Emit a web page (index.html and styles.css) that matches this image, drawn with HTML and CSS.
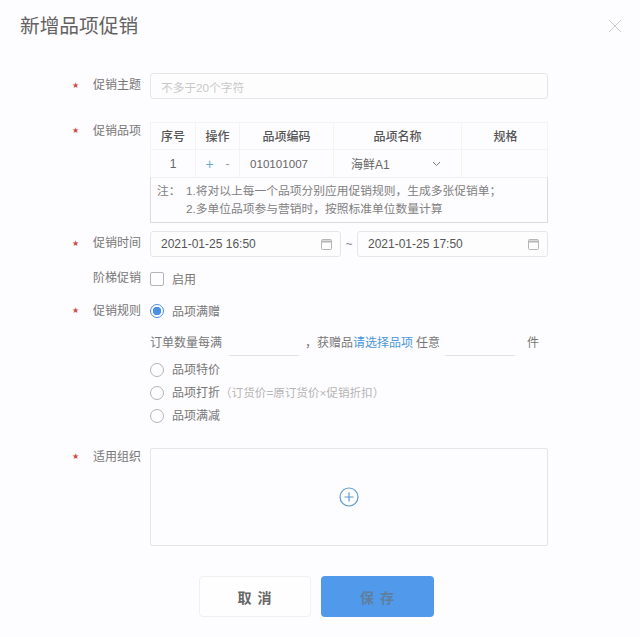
FILE: index.html
```html
<!DOCTYPE html>
<html lang="zh-CN">
<head>
    <meta charset="UTF-8">
    <meta name="viewport" content="width=device-width, initial-scale=1.0">
    <title>新增品项促销</title>
    <link rel="stylesheet" href="styles.css">
</head>
<body>
    <header class="header">
        <h1 class="title">新增品项促销</h1>
        <svg class="close" width="14" height="14" viewBox="0 0 14 14"><path d="M1 1L13 13M13 1L1 13" stroke="#c9cccf" stroke-width="1" fill="none"/></svg>
    </header>

    <form class="form">
        <div class="row row-subject">
            <span class="star">★</span>
            <label class="label">促销主题</label>
            <div class="control input placeholder">不多于20个字符</div>
        </div>

        <div class="row row-items">
            <span class="star star-top">★</span>
            <label class="label label-top">促销品项</label>
            <div class="control">
                <div class="item-table">
                    <div class="cell cell-no head">序号</div>
                    <div class="cell cell-op head">操作</div>
                    <div class="cell cell-code head">品项编码</div>
                    <div class="cell cell-name head">品项名称</div>
                    <div class="cell cell-spec head">规格</div>
                    <div class="cell cell-no">1</div>
                    <div class="cell cell-op"><span class="plus">+</span><span class="minus">-</span></div>
                    <div class="cell cell-code code-value">010101007</div>
                    <div class="cell cell-name name-select">
                        <span>海鲜A1</span>
                        <svg width="9" height="6" viewBox="0 0 9 6"><path d="M1 1L4.5 4.5L8 1" stroke="#777" fill="none"/></svg>
                    </div>
                    <div class="cell cell-spec"></div>
                </div>
                <div class="note">
                    <span class="note-tag">注：</span>
                    <div>
                        <p>1.将对以上每一个品项分别应用促销规则，生成多张促销单；</p>
                        <p>2.多单位品项参与营销时，按照标准单位数量计算</p>
                    </div>
                </div>
            </div>
        </div>

        <div class="row row-time">
            <span class="star">★</span>
            <label class="label">促销时间</label>
            <div class="control dates">
                <div class="input date">
                    <span>2021-01-25 16:50</span>
                    <svg width="11" height="11" viewBox="0 0 11 11"><rect x="0.5" y="0.5" width="10" height="10" rx="1" fill="none" stroke="#b5b5b5"/><path d="M1 2.5H10" stroke="#b5b5b5" stroke-width="2"/></svg>
                </div>
                <span class="tilde">~</span>
                <div class="input date">
                    <span>2021-01-25 17:50</span>
                    <svg width="11" height="11" viewBox="0 0 11 11"><rect x="0.5" y="0.5" width="10" height="10" rx="1" fill="none" stroke="#b5b5b5"/><path d="M1 2.5H10" stroke="#b5b5b5" stroke-width="2"/></svg>
                </div>
            </div>
        </div>

        <div class="row row-ladder">
            <span class="star"></span>
            <label class="label">阶梯促销</label>
            <div class="control option">
                <span class="checkbox"></span>
                <span class="opt-text">启用</span>
            </div>
        </div>

        <div class="row row-rule">
            <span class="star">★</span>
            <label class="label">促销规则</label>
            <div class="control">
                <div class="option"><span class="radio checked"></span><span class="opt-text">品项满赠</span></div>
                <div class="gift-line">
                    <span>订单数量每满</span>
                    <span class="blank blank-first"></span>
                    <span class="comma">，</span>
                    <span>获赠品</span>
                    <a class="link">请选择品项</a>
                    <span>任意</span>
                    <span class="blank blank-second"></span>
                    <span>件</span>
                </div>
                <div class="option option-list"><span class="radio"></span><span class="opt-text">品项特价</span></div>
                <div class="option option-list"><span class="radio"></span><span class="opt-text">品项打折</span><span class="opt-text hint">（订货价=原订货价×促销折扣）</span></div>
                <div class="option option-list"><span class="radio"></span><span class="opt-text">品项满减</span></div>
            </div>
        </div>

        <div class="row row-org">
            <span class="star star-top">★</span>
            <label class="label label-top">适用组织</label>
            <div class="control org-box">
                <svg width="20" height="20" viewBox="0 0 20 20"><circle cx="10" cy="10" r="9" fill="none" stroke="#5b9bd0" stroke-width="1.2"/><path d="M10 5.5V14.5M5.5 10H14.5" stroke="#5b9bd0" stroke-width="1.2"/></svg>
            </div>
        </div>

        <div class="actions">
            <button type="button" class="btn btn-cancel">取 消</button>
            <button type="button" class="btn btn-save">保 存</button>
        </div>
    </form>
</body>
</html>
```

FILE: styles.css
```css
* {
    box-sizing: border-box;
}
body {
    margin: 0;
    background-color: #fdfcfe;
    color: #666;
    font-family: "Liberation Sans", "Noto Sans CJK SC", sans-serif;
    font-size: 12px;
    overflow: hidden;
}
.header {
    display: flex;
    justify-content: space-between;
    align-items: center;
    padding: 12px 18px 0 20px;
    height: 40px;
}
.title {
    margin: 0;
    font-size: 19.7px;
    font-weight: 400;
    line-height: 28px;
    color: #636363;
}
.form {
    padding: 33px 92px 20px 72px;
}
.row {
    display: flex;
    align-items: flex-start;
}
.star {
    width: 21px;
    flex: none;
    color: #cf4a44;
    font-family: "DejaVu Sans", sans-serif;
    font-size: 8px;
    line-height: 26px;
}
.star-top {
    line-height: 18px;
}
.label {
    width: 57px;
    flex: none;
    line-height: 24px;
    color: #777;
}
.label-top {
    line-height: 18px;
}
.control {
    width: 398px;
    flex: none;
}
.input {
    height: 26px;
    border: 1px solid #e6e6e8;
    border-radius: 3px;
    background-color: #fdfdfe;
    display: flex;
    align-items: center;
    padding: 0 10px;
}
.placeholder {
    color: #c8c8c8;
    font-size: 11.7px;
}
.row-items {
    margin-top: 23px;
}
.item-table {
    display: grid;
    grid-template-columns: 45px 44px 94px 128px 87px;
    grid-template-rows: 27px 27px;
    border: 1px solid #f3f3f5;
    border-bottom: 0;
}
.cell {
    display: flex;
    align-items: center;
    justify-content: center;
    border-right: 1px solid #f3f3f5;
    color: #666;
}
.cell-spec {
    border-right: 0;
}
.head {
    border-bottom: 1px solid #f3f3f5;
    color: #555;
    font-weight: 500;
    padding-bottom: 1px;
}
.code-value {
    justify-content: flex-start;
    padding-left: 10px;
    font-size: 11.6px;
}
.plus {
    color: #62acc9;
    font-size: 14px;
    margin-right: 12px;
}
.minus {
    color: #999;
}
.name-select {
    justify-content: space-between;
    padding: 0 20px 0 17px;
}
.note {
    display: flex;
    height: 46px;
    border: 1px solid #dcdcde;
    border-top-color: #f0f0f2;
    padding: 4px 6px;
    color: #808080;
    font-size: 11.75px;
    line-height: 18px;
}
.note-tag {
    width: 29px;
    flex: none;
}
.note p {
    margin: 0;
}
.row-time {
    margin-top: 8px;
}
.dates {
    display: flex;
    align-items: center;
    justify-content: space-between;
}
.date {
    width: 191px;
    justify-content: space-between;
    padding-right: 8px;
    color: #555;
}
.tilde {
    color: #888;
}
.row-ladder {
    margin-top: 9px;
    height: 26px;
}
.option {
    display: flex;
    align-items: center;
    height: 26px;
    color: #777;
}
.opt-text {
    margin-bottom: 2px;
}
.checkbox {
    width: 14px;
    height: 14px;
    border: 1px solid #b5b5b5;
    border-radius: 2px;
    margin-right: 8px;
}
.radio {
    width: 14px;
    height: 14px;
    border: 1px solid #b5b5b5;
    border-radius: 50%;
    margin-right: 8px;
    flex: none;
}
.radio.checked {
    border-color: #4a90e2;
    background: radial-gradient(circle, #4a90e2 0, #4a90e2 4px, transparent 4.5px);
}
.row-rule {
    margin-top: 6px;
}
.row-rule .label {
    line-height: 27px;
}
.gift-line {
    display: flex;
    align-items: center;
    height: 29px;
    margin-top: 3px;
    color: #777;
    white-space: nowrap;
}
.blank {
    display: block;
    width: 70px;
    height: 29px;
    border-bottom: 1px solid #e2e2e4;
}
.blank-first {
    margin-left: 7px;
}
.comma {
    margin-left: 6px;
}
.link {
    color: #4a97d8;
    margin: 0 3px 0 0;
}
.blank-second {
    margin: 0 12px 0 5px;
}
.option-list {
    height: 23px;
}
.option-list:nth-child(3) {
    margin-top: 2px;
}
.hint {
    color: #b5b5b5;
    font-size: 11.6px;
}
.row-org {
    margin-top: 21px;
}
.org-box {
    height: 98px;
    border: 1px solid #e6e6e8;
    border-radius: 2px;
    display: flex;
    align-items: center;
    justify-content: center;
}
.actions {
    display: flex;
    gap: 10px;
    margin: 30px 0 0 127px;
}
.btn {
    height: 41px;
    width: 112px;
    border-radius: 4px;
    font-family: inherit;
    font-size: 14px;
    font-weight: 700;
    letter-spacing: 1px;
}
.btn-cancel {
    background-color: #fefefe;
    border: 1px solid #f0f0f2;
    color: #666;
}
.btn-save {
    width: 113px;
    background-color: #5199ea;
    border: 0;
    color: #5f7f9f;
}
```
